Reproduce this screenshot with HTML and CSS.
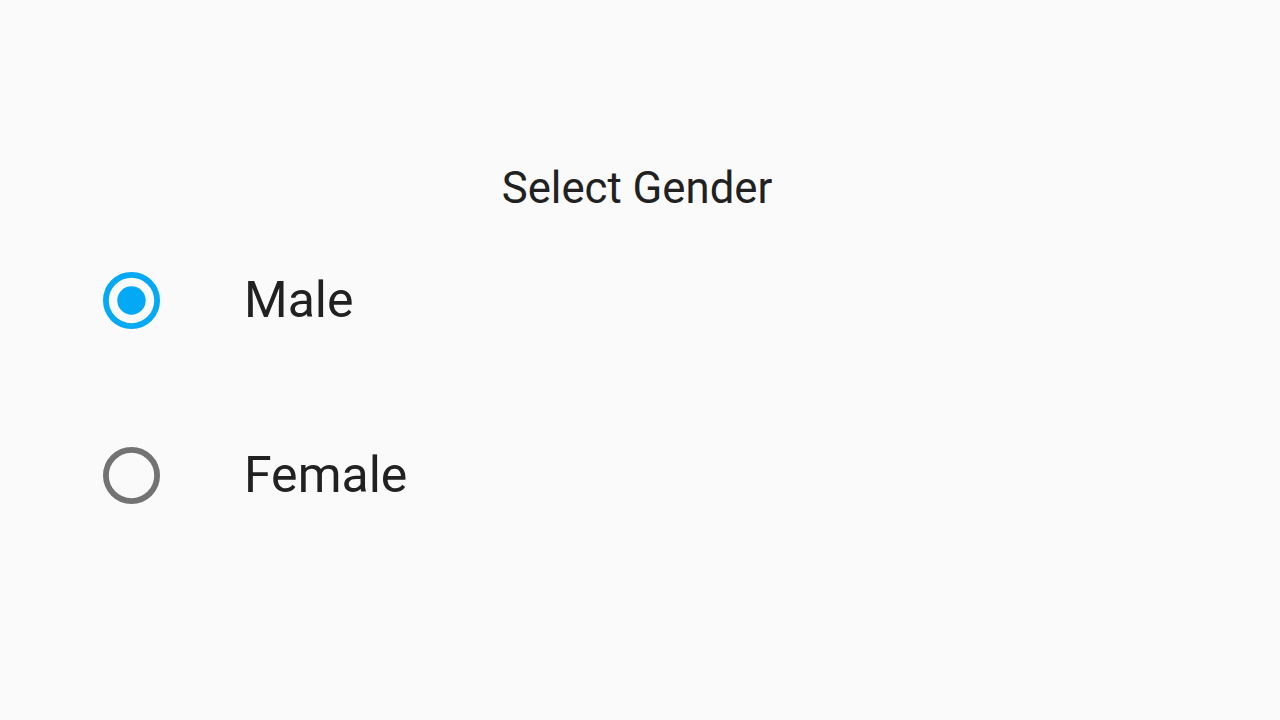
FILE: index.html
```html
<!DOCTYPE html>
<html>
<head>
<meta charset="utf-8">
<link rel="stylesheet" href="styles.css">
</head>
<body>
<main class="page">
  <h1 class="title">Select Gender</h1>
  <div class="options">
    <label class="option">
      <svg class="radio" viewBox="0 0 57 57" width="57" height="57">
        <circle cx="28.5" cy="28.5" r="25.6" fill="none" stroke="#03A9F4" stroke-width="5.8"/>
        <circle cx="28.5" cy="28.5" r="14.2" fill="#03A9F4"/>
      </svg>
      <span class="label">Male</span>
    </label>
    <label class="option">
      <svg class="radio" viewBox="0 0 57 57" width="57" height="57">
        <circle cx="28.5" cy="28.5" r="25.6" fill="none" stroke="#737373" stroke-width="5.8"/>
      </svg>
      <span class="label">Female</span>
    </label>
  </div>
</main>
</body>
</html>
```
FILE: styles.css
```css
html, body {
  margin: 0;
  padding: 0;
  background: #fafafa;
}
body {
  width: 1280px;
  height: 720px;
  font-family: Roboto, "Noto Sans", sans-serif;
  color: #212121;
}
.page {
  display: flex;
  flex-direction: column;
  padding-top: 162px;
}
.title {
  margin: 0;
  padding-right: 6px;
  font-size: 43.7px;
  font-weight: 400;
  line-height: 52px;
  text-align: center;
  color: #212121;
}
.options {
  display: flex;
  flex-direction: column;
  gap: 118px;
  margin-top: 58px;
  padding-left: 103px;
}
.option {
  display: flex;
  align-items: center;
  gap: 84px;
  height: 57px;
}
.radio {
  flex: none;
  display: block;
}
.label {
  font-size: 50px;
  line-height: 57px;
  color: #212121;
}
```
